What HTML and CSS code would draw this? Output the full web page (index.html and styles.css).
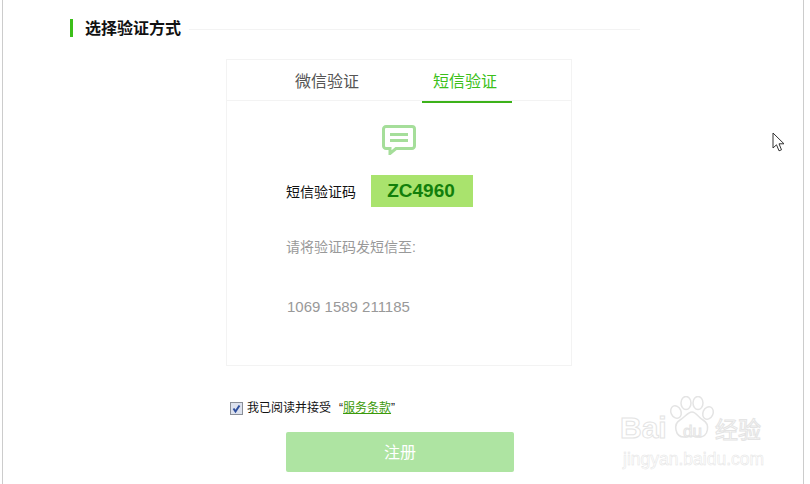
FILE: index.html
```html
<!DOCTYPE html>
<html>
	<head>
		<title>选择验证方式</title>
		<link rel="stylesheet" href="styles.css">
	</head>
	<body>
		<div class="page">
			<div class="title-row">
				<h2 class="title">选择验证方式</h2>
				<span class="title-line"></span>
			</div>
			<div class="panel">
				<div class="tabs">
					<span class="tab">微信验证</span>
					<span class="tab active">短信验证</span>
				</div>
				<div class="panel-body">
					<svg class="msg-icon" width="34" height="30" viewBox="0 0 34 30">
						<path d="M4 1.500h26a2.500 2.500 0 0 1 2.500 2.500v17a2.500 2.500 0 0 1-2.500 2.500H14l-6 5v-5H4A2.500 2.500 0 0 1 1.500 21V4A2.500 2.500 0 0 1 4 1.500z" fill="none" stroke="#A5DE9A" stroke-width="3"/>
						<path d="M8 9.500h18M8 15.500h18" stroke="#A5DE9A" stroke-width="3"/>
					</svg>
					<div class="code-row">
						<span class="code-label">短信验证码</span>
						<span class="code">ZC4960</span>
					</div>
					<p class="hint">请将验证码发短信至:</p>
					<p class="number">1069 1589 211185</p>
				</div>
			</div>
			<label class="agree">
				<svg class="agree-box" width="13" height="13" viewBox="0 0 13 13">
					<rect x="0.500" y="0.500" width="12" height="12" fill="#DDE2EE" stroke="#8A8F98"/>
					<path d="M3.500 6.500l2 3 4-6" fill="none" stroke="#2F4F9E" stroke-width="2"/>
				</svg>
				<span>我已阅读并接受</span>
				<span class="terms">“<a href="#">服务条款</a>”</span>
			</label>
			<button class="submit" type="button">注册</button>

			<div class="watermark">
				<svg class="paw" width="46" height="44" viewBox="0 0 46 44">
					<g fill="#fff" stroke="#E4E4E4" stroke-width="1.500">
						<ellipse cx="7" cy="16" rx="5" ry="6.500" transform="rotate(-25 7 16)"/>
						<ellipse cx="17" cy="7" rx="5" ry="6.500"/>
						<ellipse cx="29" cy="7" rx="5" ry="6.500"/>
						<ellipse cx="39" cy="17" rx="5" ry="6.500" transform="rotate(25 39 17)"/>
						<path d="M23 16c4 0 6 5 11 8 7 4 6 17-4 17-3 0-4-1-7-1s-5 1-8 1C6 41 4 28 11 24c5-3 8-8 12-8z"/>
					</g>
				</svg>
				<span class="wm-bai">Bai</span>
				<span class="wm-du">du</span>
				<span class="wm-cn">经验</span>
				<span class="wm-url">jingyan.baidu.com</span>
			</div>

			<svg class="cursor" width="14" height="21" viewBox="0 0 14 21">
				<path d="M1 1v15l3.500-3.200 2.500 6 2.500-1-2.500-6H12z" fill="#fff" stroke="#333" stroke-width="1"/>
			</svg>
		</div>
	</body>
</html>
```

FILE: styles.css
```css
html, body {
	margin: 0;
	padding: 0;
	background-color: #FFFFFF;
	overflow: hidden;
}
body {
	font-family: "Liberation Sans", "Noto Sans CJK SC", sans-serif;
}
.page {
	position: relative;
	box-sizing: border-box;
	width: 802px;
	height: 484px;
	margin-left: 2px;
	padding-top: 19px;
	border-left: 1px solid #CCCCCC;
	border-right: 1px solid #CCCCCC;
}

.title-row {
	display: flex;
	align-items: center;
	width: 567px;
	height: 18px;
	margin-left: 67px;
	border-left: 3px solid #3CBF1A;
}
.title {
	margin: 2px 8px 0 12px;
	font-size: 16px;
	font-weight: bold;
	line-height: 18px;
	color: #111111;
	white-space: nowrap;
}
.title-line {
	flex: 1;
	height: 1px;
	margin-top: 2px;
	background-color: #F3F3F3;
}

.panel {
	box-sizing: border-box;
	width: 346px;
	height: 307px;
	margin: 22px 0 0 223px;
	border: 1px solid #F3F3F3;
}
.tabs {
	display: flex;
	height: 40px;
	border-bottom: 1px solid #F3F3F3;
}
.tab {
	box-sizing: border-box;
	width: 90px;
	height: 43px;
	margin-left: 55px;
	font-size: 16px;
	line-height: 43px;
	text-align: center;
	color: #555555;
}
.tab + .tab {
	margin-left: 50px;
}
.tab.active {
	padding-right: 4px;
	color: #3CBF1A;
	border-bottom: 2px solid #3CB21A;
}

.panel-body {
	padding-top: 24px;
}
.msg-icon {
	display: block;
	margin-left: 155px;
}
.code-row {
	display: flex;
	align-items: center;
	height: 32px;
	margin: 20px 0 0 59px;
}
.code-label {
	width: 85px;
	font-size: 14px;
	color: #111111;
}
.code {
	box-sizing: border-box;
	width: 102px;
	height: 32px;
	padding-right: 2px;
	font-size: 19px;
	font-weight: bold;
	line-height: 32px;
	text-align: center;
	color: #127F0B;
	background-color: #A9E36D;
}
.hint, .number {
	margin: 0 0 0 59px;
	font-size: 14px;
	line-height: 20px;
	color: #999999;
}
.hint {
	margin-top: 30px;
}
.number {
	margin: 40px 0 0 60px;
	font-size: 15px;
}

.agree {
	display: flex;
	align-items: center;
	height: 14px;
	margin: 35px 0 0 227px;
	font-size: 12px;
	line-height: 12px;
	color: #111111;
}
.agree span {
	margin-top: -1px;
}
.agree-box {
	margin-right: 4px;
}
.agree .terms {
	margin-left: 8px;
}
.terms a {
	color: #3C9A0A;
}

.submit {
	display: block;
	width: 228px;
	height: 40px;
	margin: 17px 0 0 283px;
	padding: 0 0 2px;
	border: 0;
	border-radius: 2px;
	font-family: inherit;
	font-size: 16px;
	color: #FFFFFF;
	background-color: #AEE4A2;
}

.watermark {
	position: absolute;
	left: 617px;
	top: 395px;
	width: 150px;
	height: 75px;
	color: #FFFFFF;
	-webkit-text-stroke: 1px #E4E4E4;
}
.watermark span {
	position: absolute;
	white-space: nowrap;
}
.paw {
	position: absolute;
	left: 49px;
	top: 1px;
}
.wm-bai {
	left: 0;
	top: 16px;
	font-size: 30px;
	font-weight: bold;
	line-height: 34px;
}
.wm-du {
	left: 63px;
	top: 27px;
	font-size: 17px;
	line-height: 20px;
}
.wm-cn {
	left: 95px;
	top: 20px;
	font-size: 23px;
	line-height: 30px;
}
.wm-url {
	left: 3px;
	top: 54px;
	font-size: 17.500px;
	line-height: 20px;
	-webkit-text-stroke-width: 0.500px;
}

.cursor {
	position: absolute;
	left: 769px;
	top: 132px;
}
```
